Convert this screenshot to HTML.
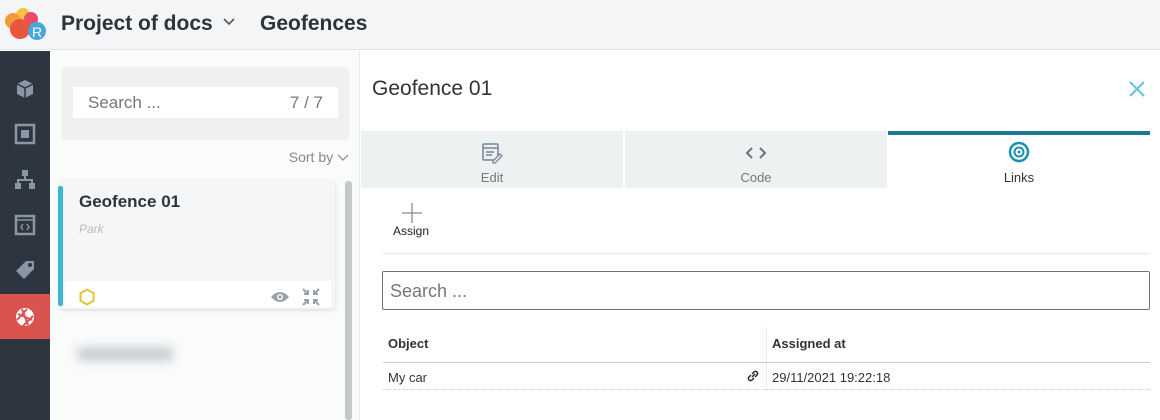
<!DOCTYPE html>
<html><head><meta charset="utf-8"><style>
*{box-sizing:border-box;margin:0;padding:0}
body{width:1160px;height:420px;overflow:hidden;font-family:"Liberation Sans",sans-serif;background:#fff;position:relative;color:#333}
.top{position:absolute;left:0;top:0;width:1160px;height:50px;background:#f3f5f6;border-bottom:1px solid #e3e6e8}
.top .t{position:absolute;top:12px;font-size:21px;color:#2d3338;font-weight:bold}
.side{position:absolute;left:0;top:51px;width:50px;height:369px;background:#2c3540}
.side .ic{position:absolute;left:0;width:50px;height:44px;display:flex;align-items:center;justify-content:center}
.left{position:absolute;left:50px;top:51px;width:310px;height:369px;background:#fafbfb;border-right:1px solid #e6e8ea}
.sbox{position:absolute;left:12px;top:16px;width:287px;height:73px;background:#eef0f2;border-radius:3px}
.sin{position:absolute;left:11px;top:20px;width:265px;height:31px;background:#fff;font-size:17px;color:#777;padding:6px 15px}
.card{position:absolute;left:10px;top:130px;width:275px;height:128px;background:#f5f6f7;box-shadow:0 1px 4px rgba(0,0,0,.15);border-radius:3px}
.right{position:absolute;left:361px;top:51px;width:799px;height:369px;background:#fff}
.tab{position:absolute;top:80px;height:57px;background:#eef1f2;text-align:center;font-size:13px;color:#777}
.tab span{position:absolute;left:0;right:0;top:39px}
</style></head><body>
<div class="top">
 <svg style="position:absolute;left:3px;top:6px" width="44" height="36" viewBox="0 0 44 36">
  <circle cx="20" cy="9" r="7" fill="#f5c242"/><circle cx="10" cy="15" r="8" fill="#f29a3a"/><circle cx="28" cy="13" r="7" fill="#e84c6a"/>
  <circle cx="17" cy="23" r="10" fill="#e8563f"/><circle cx="34" cy="25" r="9" fill="#4aa8d8"/>
  <text x="29" y="31" font-size="14" fill="#fff" font-family="Liberation Sans">R</text></svg>
 <div class="t" style="left:61px">Project of docs</div>
 <svg style="position:absolute;left:223px;top:18px" width="12" height="8"><path d="M1 1l5 5 5-5" stroke="#555" stroke-width="1.6" fill="none"/></svg>
 <div class="t" style="left:260px">Geofences</div>
</div>
<div class="side">
 <div class="ic" style="top:16px"><svg width="22" height="22" viewBox="0 0 22 22"><path d="M11 2l8 4v10l-8 4-8-4V6z" fill="#8a96a1"/><path d="M3 6l8 4 8-4M11 10v10" stroke="#2c3540" stroke-width="1.5" fill="none"/></svg></div>
 <div class="ic" style="top:61px"><svg width="22" height="22"><rect x="2" y="2" width="18" height="18" fill="none" stroke="#8a96a1" stroke-width="2.5"/><rect x="7" y="7" width="8" height="8" fill="#8a96a1"/></svg></div>
 <div class="ic" style="top:107px"><svg width="22" height="22"><rect x="8" y="1" width="6" height="6" fill="#8a96a1"/><rect x="1" y="14" width="6" height="6" fill="#8a96a1"/><rect x="15" y="14" width="6" height="6" fill="#8a96a1"/><path d="M11 7v4M4 14v-3h14v3" stroke="#8a96a1" stroke-width="2" fill="none"/></svg></div>
 <div class="ic" style="top:152px"><svg width="22" height="22"><rect x="2" y="2" width="18" height="18" fill="none" stroke="#8a96a1" stroke-width="2.5"/><path d="M2 6h18M9 10l-2 3 2 3M13 10l2 3-2 3" stroke="#8a96a1" stroke-width="1.5" fill="none"/></svg></div>
 <div class="ic" style="top:197px"><svg width="22" height="22"><path d="M12 2h8v8L10 20 2 12z" fill="#8a96a1"/><circle cx="16" cy="6" r="2" fill="#2c3540"/></svg></div>
 <div class="ic" style="top:243px;height:45px;background:#d9534f"><svg width="22" height="22"><circle cx="11" cy="11" r="9" fill="#fff"/><path d="M4 8l14 6M8 3l6 16M3 14l10-11M9 20l10-10" stroke="#d9534f" stroke-width="2"/></svg></div>
</div>
<div class="left">
 <div class="sbox"><div class="sin">Search ...<span style="float:right">7 / 7</span></div></div>
 <div style="position:absolute;right:10px;top:98px;font-size:14px;color:#888">Sort by <svg width="12" height="8"><path d="M1 1l5 5 5-5" stroke="#888" stroke-width="1.2" fill="none"/></svg></div>
 <div class="card">
  <div style="position:absolute;left:-2px;top:5px;width:5px;height:120px;background:#3bb6d3;border-radius:2px"></div>
  <div style="position:absolute;left:19px;top:11px;font-size:17px;font-weight:bold;color:#2d3338">Geofence 01</div>
  <div style="position:absolute;left:19px;top:41px;font-size:12px;font-style:italic;color:#bbb">Park</div>
  <div style="position:absolute;left:5px;top:100px;width:266px;height:26px;background:#fff"></div>
  <svg style="position:absolute;left:18px;top:107px" width="18" height="18"><path d="M9 1.5l6.5 3.75v7.5L9 16.5l-6.5-3.75v-7.5z" fill="none" stroke="#e6c530" stroke-width="2"/></svg>
  <svg style="position:absolute;left:210px;top:109px" width="20" height="14"><path d="M1 7q9-10 18 0q-9 10-18 0z" fill="#9aa0a5"/><circle cx="10" cy="7" r="3" fill="#fff"/><circle cx="10" cy="7" r="1.6" fill="#9aa0a5"/></svg>
  <svg style="position:absolute;left:240px;top:105px" width="22" height="22"><path d="M3 3l5 5M8 4v4H4M19 3l-5 5M14 4v4h4M3 19l5-5M4 14h4v4M19 19l-5-5M18 14h-4v4" stroke="#9aa0a5" stroke-width="2" fill="none"/></svg>
 </div>
 <div style="position:absolute;left:28px;top:296px;width:95px;height:14px;background:#c9cdd1;filter:blur(5px)"></div>
 <div style="position:absolute;left:295px;top:130px;width:7px;height:239px;background:#c6c9cc;border-radius:3px"></div>
</div>
<div class="right">
 <div style="position:absolute;left:11px;top:26px;font-size:21px;color:#333">Geofence 01</div>
 <svg style="position:absolute;left:767px;top:29px" width="18" height="18"><path d="M2 2l14 14M16 2L2 16" stroke="#5fc4d6" stroke-width="2"/></svg>
 <div class="tab" style="left:0;width:262px"><svg style="position:absolute;left:120px;top:11px" width="22" height="22"><rect x="2" y="2" width="15" height="16" rx="1" fill="none" stroke="#7a8691" stroke-width="1.5"/><path d="M2 6h15M5 10h8M5 13h6" stroke="#7a8691" stroke-width="1.5"/><path d="M12 19l7-7 2 2-7 7h-2z" fill="#eef1f2" stroke="#7a8691" stroke-width="1.3"/></svg><span>Edit</span></div>
 <div class="tab" style="left:264px;width:262px"><svg style="position:absolute;left:121px;top:15px" width="20" height="14"><path d="M6 2L1 7l5 5M14 2l5 5-5 5" stroke="#6c7985" stroke-width="2.2" fill="none"/></svg><span>Code</span></div>
 <div class="tab" style="left:527px;width:262px;background:#fff;color:#333;border-top:4px solid #1b7a93"><svg style="position:absolute;left:120px;top:6px" width="22" height="22"><circle cx="11" cy="11" r="9" fill="none" stroke="#1792b0" stroke-width="2.5"/><circle cx="11" cy="11" r="4.5" fill="none" stroke="#1792b0" stroke-width="2"/><circle cx="11" cy="11" r="1.5" fill="#1792b0"/></svg><span style="top:35px">Links</span></div>
 <svg style="position:absolute;left:40px;top:151px" width="22" height="22"><path d="M11 1v20M1 11h20" stroke="#888" stroke-width="1.3"/></svg>
 <div style="position:absolute;left:32px;top:173px;font-size:12px;color:#222">Assign</div>
 <div style="position:absolute;left:22px;top:202px;width:767px;height:1px;background:#e8eaec;box-shadow:0 1px 2px rgba(0,0,0,.06)"></div>
 <div style="position:absolute;left:21px;top:220px;width:768px;height:39px;border:1px solid #6e7377;border-radius:2px;font-size:18px;color:#777;padding:9px 7px">Search ...</div>
 <div style="position:absolute;left:405px;top:276px;width:0;height:63px;border-left:1px dotted #ddd"></div>
 <div style="position:absolute;left:27px;top:285px;font-size:13px;font-weight:bold;color:#333">Object</div>
 <div style="position:absolute;left:411px;top:285px;font-size:13px;font-weight:bold;color:#333">Assigned at</div>
 <div style="position:absolute;left:22px;top:311px;width:767px;height:1px;background:#ccc"></div>
 <div style="position:absolute;left:27px;top:319px;font-size:13px;color:#333">My car</div>
 <svg style="position:absolute;left:385px;top:318px" width="14" height="14"><path d="M6 8l3-3M5 6L3 8a2 2 0 0 0 3 3l2-2M9 8l2-2a2 2 0 0 0-3-3L6 5" stroke="#222" stroke-width="1.4" fill="none"/></svg>
 <div style="position:absolute;left:411px;top:319px;font-size:13px;color:#333">29/11/2021 19:22:18</div>
 <div style="position:absolute;left:22px;top:338px;width:767px;height:0;border-top:1px dotted #ccc"></div>
</div>
</body></html>
